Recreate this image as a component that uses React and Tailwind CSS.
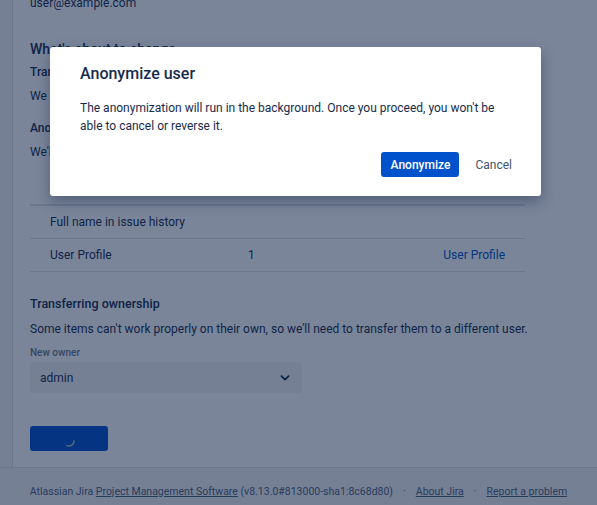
export default function App() {
  const font = { fontFamily: 'Roboto, "Noto Sans", sans-serif' };

  return (
    <div className="relative h-[505px] w-[597px] overflow-hidden bg-white text-[#172b4d]" style={font}>
      {/* page underneath */}
      <div className="flex h-[467px]">
        <div className="w-[13px] shrink-0 border-r border-[#dfe1e6] bg-[#f4f5f7]" />
        <div className="flex-1 pl-[17px] pr-[40px]">
          <p className="-mt-[6px] text-[12px] leading-[18px]">user@example.com</p>

          <h3 className="mt-[28px] text-[14px] font-medium leading-[18px]">What's about to change</h3>
          <p className="mt-[5px] text-[12px] font-medium leading-[18px]">Transferring content</p>
          <p className="mt-[6px] text-[12px] leading-[18px]">We have to transfer some of this user's items to another user.</p>
          <p className="mt-[14px] text-[12px] font-medium leading-[18px]">Anonymization</p>
          <p className="mt-[6px] text-[12px] leading-[18px]">We'll anonymize personal data in these places.</p>

          <div className="mt-[12px] w-[495px] text-[12px]">
            <div className="flex h-[33px] items-center border-b-2 border-[#dfe1e6] px-[20px] font-medium text-[#5e6c84]">
              <span className="w-[198px]">Item</span>
              <span className="flex-1">Count</span>
              <span>Location</span>
            </div>
            <div className="flex h-[33px] items-center border-b border-[#dfe1e6] px-[20px]">
              <span className="w-[198px]">Full name in issue history</span>
            </div>
            <div className="flex h-[33px] items-center border-b border-[#dfe1e6] px-[20px]">
              <span className="w-[198px]">User Profile</span>
              <span className="flex-1">1</span>
              <span className="text-[#0052cc]">User Profile</span>
            </div>
          </div>

          <h3 className="mt-[23px] text-[12.5px] font-medium leading-[18px]">Transferring ownership</h3>
          <p className="mt-[7px] whitespace-nowrap text-[12px] leading-[18px]">
            Some items can't work properly on their own, so we'll need to transfer them to a different user.
          </p>
          <p className="mt-[8px] text-[10px] font-medium leading-[14px] text-[#6b778c]">New owner</p>
          <div className="mt-[2px] flex h-[31px] w-[272px] items-center justify-between rounded-[3px] bg-[#f4f5f7] pl-[10px] pr-[12px] text-[12px]">
            <span>admin</span>
            <svg width="10" height="10" viewBox="0 0 10 10" fill="none">
              <path d="M1.5 3.2 L5 6.7 L8.5 3.2" stroke="#172b4d" strokeWidth="1.8" strokeLinecap="round" strokeLinejoin="round" />
            </svg>
          </div>

          <div className="mt-[33px] flex h-[25px] w-[78px] items-center justify-center rounded-[3px] bg-[#0052cc]">
            <svg width="14" height="14" viewBox="0 0 14 14" fill="none" className="mt-[4px]">
              <path d="M12 7 A5 5 0 0 1 5 11.6" stroke="#b3bac5" strokeWidth="1.5" strokeLinecap="round" />
            </svg>
          </div>
        </div>
      </div>

      <footer className="flex h-[38px] items-center justify-center border-t border-[#dfe1e6] bg-[#f4f5f7] pt-[10px] text-[10.5px] text-[#505f79]">
        <span>Atlassian Jira <span className="underline">Project Management Software</span> (v8.13.0#813000-sha1:8c68d80)</span>
        <span className="mx-[10px]">·</span>
        <span className="underline">About Jira</span>
        <span className="mx-[10px]">·</span>
        <span className="underline">Report a problem</span>
      </footer>

      {/* blanket */}
      <div className="absolute inset-0 bg-[#091e42]/[0.54]" />

      {/* dialog */}
      <div className="absolute left-[50px] top-[47px] w-[491px] rounded-[3px] bg-white px-[30px] pb-[19px] pt-[17px] shadow-[0_6px_14px_rgba(9,30,66,0.35)]">
        <h2 className="text-[16px] font-medium leading-[20px]">Anonymize user</h2>
        <p className="mt-[15px] text-[12px] leading-[18px]">
          The anonymization will run in the background. Once you proceed, you won't be able to cancel or reverse it.
        </p>
        <div className="-mr-[13px] mt-[17px] flex justify-end gap-[4px]">
          <button className="h-[25px] w-[78px] rounded-[3px] bg-[#0052cc] text-[12px] font-medium text-white">Anonymize</button>
          <button className="h-[25px] px-[12px] text-[12px] text-[#42526e]">Cancel</button>
        </div>
      </div>
    </div>
  );
}
